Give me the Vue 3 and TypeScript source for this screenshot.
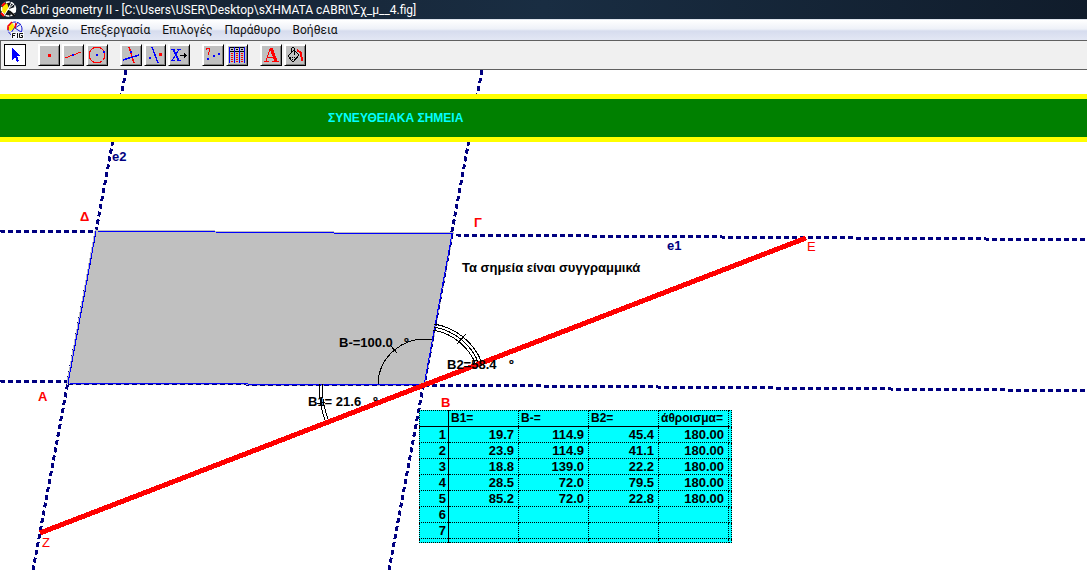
<script setup lang="ts">
interface Label {
  text: string
  x: number
  y: number
  kind: string
}

const menus: string[] = ['Αρχείο', 'Επεξεργασία', 'Επιλογές', 'Παράθυρο', 'Βοήθεια']

const toolGroups: string[][] = [
  ['pointer'],
  ['point', 'line', 'circle'],
  ['perpendicular', 'reflection', 'macro'],
  ['property', 'table'],
  ['text', 'fill'],
]

const labels: Label[] = [
  { text: 'e2', x: 112, y: 91, kind: 'navy' },
  { text: 'e1', x: 667, y: 180, kind: 'navy' },
  { text: 'Δ', x: 80, y: 151, kind: 'red strong' },
  { text: 'Γ', x: 474, y: 157, kind: 'red strong' },
  { text: 'Ε', x: 807, y: 181, kind: 'red' },
  { text: 'Α', x: 38, y: 331, kind: 'red strong' },
  { text: 'Β', x: 441, y: 337, kind: 'red strong' },
  { text: 'Ζ', x: 42, y: 477, kind: 'red' },
]

const columns: string[] = ['Β1=', 'Β-=', 'Β2=', 'άθροισμα=']
const rows: string[][] = [
  ['19.7', '114.9', '45.4', '180.00'],
  ['23.9', '114.9', '41.1', '180.00'],
  ['18.8', '139.0', '22.2', '180.00'],
  ['28.5', '72.0', '79.5', '180.00'],
  ['85.2', '72.0', '22.8', '180.00'],
  ['', '', '', ''],
  ['', '', '', ''],
]
</script>

<template>
  <div class="window">
    <header class="titlebar">
      <svg class="app-icon" width="17" height="17" viewBox="0 0 17 17" aria-hidden="true">
        <circle cx="8.500" cy="8.500" r="7" fill="#10151c" />
        <path d="M3 5L7 2L9 8L5 13L1 10Z" fill="#ffe800" />
        <path d="M9 8L15 6L16 11L11 13Z" fill="#fff" />
        <circle cx="8.500" cy="8" r="7" fill="none" stroke="#fff" stroke-width="1.500" stroke-dasharray="4 1" />
        <path d="M4 15L12 1M8 8L15 14M8 8L14 3" stroke="#fff" stroke-width="1" />
        <path d="M2 5L5 2M1 12L4 15" stroke="#f00" stroke-width="2" />
        <path d="M9 10L15 15" stroke="#111" stroke-width="2" />
      </svg>
      <h1>Cabri geometry II - [C:\Users\USER\Desktop\sXHMATA cABRI\Σχ_μ__4.fig]</h1>
    </header>

    <nav class="menubar">
      <svg class="doc-icon" width="18" height="18" viewBox="0 0 18 18" aria-hidden="true">
        <path d="M3 4L7 2L9 8L4 10L2 8Z" fill="#ffe800" />
        <circle cx="9" cy="8" r="7" fill="none" stroke="#1414d2" stroke-dasharray="4 1" />
        <path d="M5 12L12 1M9 7L15 3M9 7L15 11" stroke="#1414d2" stroke-width="1" />
        <path d="M2 9L2 5L6 1M9 7L10 2" fill="none" stroke="#f00" stroke-width="1.500" />
        <path d="M5 18V11H18V18Z" fill="#f4f6fb" />
        <path
          d="M6.500 17V12.500H9.500M6.500 14.500H9M11.500 12V17M17 12.500H13.500V16.500H16.500V14.500H15"
          fill="none"
          stroke="#111"
          stroke-width="1"
        />
      </svg>
      <button v-for="menu in menus" :key="menu" type="button" class="menu">{{ menu }}</button>
    </nav>

    <div class="toolbar" role="toolbar">
      <div v-for="(group, i) in toolGroups" :key="i" class="group">
        <button
          v-for="tool in group"
          :key="tool"
          type="button"
          class="tool"
          :class="{ active: tool === 'pointer' }"
          :aria-label="tool"
        >
          <svg width="18" height="18" viewBox="0 0 18 18" shape-rendering="crispEdges" aria-hidden="true">
            <path v-if="tool === 'pointer'" d="M6 2V14L9 11L11 16L13 15L11 10H15Z" fill="#00f" />
            <rect v-else-if="tool === 'point'" x="8" y="8" width="3" height="3" fill="#f00" />
            <g v-else-if="tool === 'line'">
              <path d="M1 12L17 6" stroke="#f00" />
              <rect x="8" y="8" width="2" height="2" fill="#00f" />
            </g>
            <g v-else-if="tool === 'circle'">
              <path
                d="M6 1.500H12L14.500 3.500L16.500 6V12L14.500 14.500L12 16.500H6L3.500 14.500L1.500 12V6L3.500 3.500Z"
                fill="none"
                stroke="#f00"
              />
              <rect x="8" y="8" width="2" height="2" fill="#00f" />
              <rect x="15" y="5" width="2" height="2" fill="#00f" />
            </g>
            <g v-else-if="tool === 'perpendicular'">
              <path d="M7 1L12 17" stroke="#f00" stroke-width="1.500" />
              <path d="M1 14L17 9" stroke="#00f" stroke-width="1.500" />
              <rect x="8" y="5" width="2" height="2" fill="#00f" />
            </g>
            <g v-else-if="tool === 'reflection'">
              <path d="M6 1L12 17" stroke="#00f" stroke-width="1.500" />
              <rect x="3" y="11" width="2" height="2" fill="#00f" />
              <rect x="13" y="7" width="3" height="3" fill="#f00" />
            </g>
            <g v-else-if="tool === 'macro'">
              <path d="M1 3.500H5M7 3.500H11M1 14.500H5M7 14.500H11M9 3L2 15" stroke="#00f" fill="none" />
              <path d="M3 3L9 15" stroke="#00f" stroke-width="2" />
              <path d="M10 9.500H17M14.500 7V12M15.500 8V11" stroke="#000" fill="none" />
            </g>
            <g v-else-if="tool === 'property'">
              <path d="M2.500 4V2.500H5.500V5.500L4 6.500V9" stroke="#f00" fill="none" />
              <rect x="3" y="12" width="2" height="2" fill="#00f" />
              <rect x="9" y="9" width="2" height="2" fill="#00f" />
              <rect x="14" y="7" width="2" height="2" fill="#00f" />
            </g>
            <g v-else-if="tool === 'table'">
              <rect x="1" y="1" width="16" height="1" fill="#000" />
              <rect x="1" y="5" width="16" height="1" fill="#000" />
              <rect v-for="x in [1, 6, 11, 16]" :key="x" :x="x" y="1" width="1" height="16" fill="#00f" />
              <g v-for="x in [3, 8, 13]" :key="x">
                <rect :x="x" y="3" width="2" height="1" fill="#000" />
                <rect v-for="y in [7, 9, 11, 13, 15]" :key="y" :x="x" :y="y" width="2" height="1" fill="#f00" />
              </g>
            </g>
            <g v-else-if="tool === 'text'" stroke="#f00" fill="none">
              <path d="M9 2L14 15" stroke-width="3" />
              <path d="M8 3L4 15M5 11.500H12M2 15.500H7M10 15.500H17" />
            </g>
            <g v-else>
              <path d="M2 10L8 4L13 9L8 15H6Z" fill="#c0c0c0" stroke="#000" />
              <path d="M5.500 7V2.500L6.500 1.500H7.500L8.500 3V9" fill="none" stroke="#000" />
              <path d="M4 11.500H11M6 13.500H9" stroke="#000" stroke-dasharray="1 1" />
              <path d="M11 4L15 7L16 15" fill="none" stroke="#f00" stroke-width="2" />
            </g>
          </svg>
        </button>
      </div>
    </div>

    <main class="canvas">
      <svg class="figure" width="100%" height="100%" aria-label="Cabri">
        <g class="guides">
          <line x1="126" y1="0" x2="33" y2="500" />
          <line x1="482" y1="0" x2="389" y2="500" />
          <line x1="0" y1="161" x2="95" y2="162" />
          <line x1="456" y1="165" x2="2174" y2="178" />
          <line x1="0" y1="311" x2="68" y2="312" />
          <line x1="424" y1="315" x2="2174" y2="330" />
        </g>
        <polygon class="backing" points="96,161 452,164 424,315 68,313" />
        <g class="edge-dashes">
          <line x1="96" y1="162" x2="68" y2="314" />
          <line x1="453" y1="164" x2="425" y2="315" />
          <line x1="68" y1="314" x2="424" y2="316" />
        </g>
        <polygon class="outline" points="96,161 452,164 424,315 68,313" />
        <g class="arcs">
          <path d="M378 314A46 46 0 0 1 432 270" />
          <path d="M391 276L397 283" />
          <path d="M433 260A56 56 0 0 1 476 295" />
          <path d="M434 257A59 59 0 0 1 479 294" />
          <path d="M434 254A62 62 0 0 1 482 293" />
          <path d="M457 274L466 264" />
          <path d="M319 314A105 105 0 0 0 326 353" />
          <path d="M322 314A102 102 0 0 0 329 352" />
          <path d="M317 334L325 332" />
        </g>
        <line class="segment" x1="40" y1="463" x2="806" y2="168" />
        <text v-for="label in labels" :key="label.text" :x="label.x" :y="label.y" :class="label.kind">
          {{ label.text }}
        </text>
        <g class="strong">
          <text x="462" y="202">Τα σημεία είναι συγγραμμικά</text>
          <text x="339" y="277">Β-=100.0</text>
          <text x="404" y="277">º</text>
          <text x="447" y="299">Β2=58.4</text>
          <text x="509" y="299">º</text>
          <text x="308" y="336">Β1= 21.6</text>
          <text x="373" y="336">º</text>
        </g>
      </svg>

      <div class="banner"><span>ΣΥΝΕΥΘΕΙΑΚΑ ΣΗΜΕΙΑ</span></div>

      <table class="data">
        <thead>
          <tr>
            <th class="index"></th>
            <th v-for="column in columns" :key="column" scope="col">{{ column }}</th>
            <td class="margin"></td>
          </tr>
        </thead>
        <tbody>
          <tr v-for="(row, r) in rows" :key="r">
            <th class="index" scope="row">{{ r + 1 }}</th>
            <td v-for="(cell, c) in row" :key="c">{{ cell }}</td>
            <td class="margin"></td>
          </tr>
          <tr class="last">
            <th class="index"></th>
            <td v-for="column in columns" :key="column"></td>
            <td class="margin"></td>
          </tr>
        </tbody>
      </table>
    </main>
  </div>
</template>

<style>
body {
  margin: 0;
}
</style>

<style scoped>
.window {
  display: flex;
  flex-direction: column;
  height: 100vh;
  overflow: hidden;
  background: #fff;
  font-family: Roboto, "Noto Sans", sans-serif;
  font-size: 12px;
}

.titlebar {
  display: flex;
  flex: none;
  align-items: center;
  gap: 4px;
  height: 20px;
  box-sizing: border-box;
  border-bottom: 1px solid #dfe5ee;
  background: linear-gradient(90deg, #16202e, #192d42 50%, #101c2b);
  color: #fff;
}

h1 {
  margin: 0;
  font-size: 12px;
  font-weight: 400;
  line-height: 18px;
  white-space: nowrap;
}

.menubar {
  display: flex;
  flex: none;
  align-items: center;
  height: 20px;
  padding-left: 6px;
  background: linear-gradient(#fff, #eef1f8 45%, #d6dcee 55%, #e3e7f4);
}

.menu {
  padding: 0 6px;
  border: 0;
  background: none;
  color: #111;
  font: inherit;
  line-height: 20px;
}

.toolbar {
  display: flex;
  flex: none;
  gap: 12px;
  height: 30px;
  padding: 3px 0 0 3px;
  box-sizing: border-box;
  border-top: 1px solid #606060;
  border-bottom: 1px solid #606060;
  border-left: 1px solid #606060;
  background: #f0f0f0;
}

.group {
  display: flex;
  gap: 2px;
}

.tool {
  display: grid;
  place-items: center;
  width: 22px;
  height: 22px;
  padding: 0;
  border: 1px solid;
  border-color: #fff #000 #000 #fff;
  border-radius: 0;
  background: #c0c0c0;
  box-shadow: inset 1px 1px #fff, inset -1px -1px #808080;
}

.tool.active {
  border-color: #000;
  background: #fff;
  box-shadow: none;
}

.canvas {
  position: relative;
  flex: 1;
  min-height: 0;
  overflow: hidden;
  font-family: "Liberation Sans", Arial, sans-serif;
  font-size: 13px;
}

.figure {
  position: absolute;
  inset: 0;
  shape-rendering: crispEdges;
}

.guides {
  stroke: #000080;
  stroke-width: 3;
  stroke-dasharray: 5 3;
}

.backing {
  fill: #c0c0c0;
  stroke: #c0c0c0;
  stroke-width: 3;
}

.outline {
  fill: none;
  stroke: #00f;
}

.edge-dashes {
  stroke: #000080;
  stroke-dasharray: 5 3;
}

.arcs {
  fill: none;
  stroke: #000;
}

.segment {
  stroke: #f00;
  stroke-width: 5;
}

.navy {
  fill: #000080;
  font-weight: 700;
}

.red {
  fill: #f00;
}

.strong {
  font-weight: 700;
}

.banner {
  position: relative;
  height: 38px;
  margin-top: 24px;
  padding-left: 328px;
  border-top: 5px solid #ff0;
  border-bottom: 5px solid #ff0;
  background: #008000;
  color: #0ff;
  font-size: 12px;
  font-weight: 700;
  line-height: 38px;
}

.data {
  position: absolute;
  top: 340px;
  left: 419px;
  width: 313px;
  border-collapse: collapse;
  table-layout: fixed;
  background: #0ff;
  color: #000;
  font-size: 13px;
  font-weight: 700;
  line-height: 15px;
}

.data th,
.data td {
  height: 15px;
  padding: 0 4px;
  border: 1px dotted #000;
  text-align: right;
}

.data thead th {
  padding: 0 2px;
  border-bottom: 1px solid #000;
  font-size: 12px;
  text-align: left;
}

.data .index {
  width: 29px;
  padding: 0 2px;
  box-sizing: border-box;
  border-right: 1px solid #000;
}

.data .margin {
  width: 3px;
  padding: 0;
  box-sizing: border-box;
}

.data .last th,
.data .last td {
  height: 3px;
  line-height: 3px;
}
</style>
